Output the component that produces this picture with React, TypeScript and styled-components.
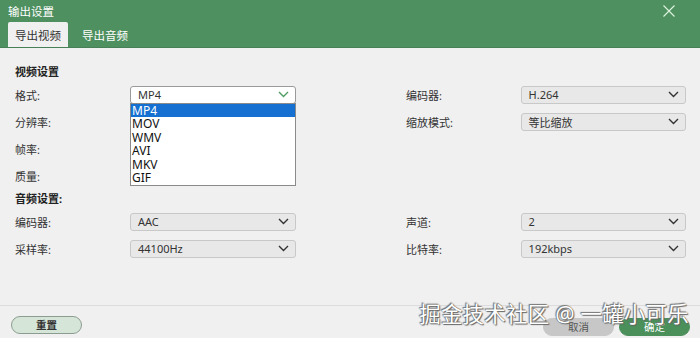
import styled, { createGlobalStyle } from "styled-components";

const GlobalStyle = createGlobalStyle`
  html, body { margin: 0; padding: 0; background: #f0f0f0; }
  body {
    font-family: "Noto Sans", "Noto Sans CJK SC", sans-serif;
    width: 700px;
    height: 338px;
    overflow: hidden;
  }
`;

const FORMATS = ["MP4", "MOV", "WMV", "AVI", "MKV", "GIF"];

const Chevron = ({ color }: { color: string }) => (
  <svg width="11" height="7" viewBox="0 0 11 7">
    <polyline
      points="1,1 5.5,5.5 10,1"
      fill="none"
      stroke={color}
      strokeWidth="1.4"
    />
  </svg>
);

interface SelectProps {
  value: string;
  open?: boolean;
}

const Select = ({ value, open }: SelectProps) => (
  <SelectWrap>
    <SelectBox $open={open}>
      <span>{value}</span>
      <Chevron color={open ? "#4f9d62" : "#333"} />
    </SelectBox>
    {open && (
      <Menu>
        {FORMATS.map((f) => (
          <MenuItem key={f} $active={f === value}>
            {f}
          </MenuItem>
        ))}
      </Menu>
    )}
  </SelectWrap>
);

const Field = ({
  label,
  children,
}: {
  label: string;
  children?: React.ReactNode;
}) => (
  <FieldRow>
    <Label>{label}</Label>
    {children}
  </FieldRow>
);

export default function App() {
  return (
    <Window>
      <GlobalStyle />
      <Header>
        <TitleBar>
          <Title>输出设置</Title>
          <CloseBtn>
            <svg width="12" height="12" viewBox="0 0 12 12">
              <path d="M0.5 0.5 L11.5 11.5 M11.5 0.5 L0.5 11.5" stroke="#dff3df" strokeWidth="1.1" />
            </svg>
          </CloseBtn>
        </TitleBar>
        <Tabs>
          <Tab $active>导出视频</Tab>
          <Tab>导出音频</Tab>
        </Tabs>
      </Header>

      <Content>
        <SectionTitle>视频设置</SectionTitle>
        <Grid>
          <Field label="格式:">
            <Select value="MP4" open />
          </Field>
          <Field label="编码器:">
            <Select value="H.264" />
          </Field>
          <Field label="分辨率:">
            <Select value="" />
          </Field>
          <Field label="缩放模式:">
            <Select value="等比缩放" />
          </Field>
          <Field label="帧率:">
            <Select value="" />
          </Field>
          <div />
          <Field label="质量:">
            <Select value="" />
          </Field>
          <div />
        </Grid>

        <SectionTitle $tight>音频设置:</SectionTitle>
        <Grid>
          <Field label="编码器:">
            <Select value="AAC" />
          </Field>
          <Field label="声道:">
            <Select value="2" />
          </Field>
          <Field label="采样率:">
            <Select value="44100Hz" />
          </Field>
          <Field label="比特率:">
            <Select value="192kbps" />
          </Field>
        </Grid>
      </Content>

      <Footer>
        <Button $kind="reset">重置</Button>
        <Actions>
          <Button $kind="cancel">取消</Button>
          <Button $kind="ok">确定</Button>
        </Actions>
      </Footer>

      <Watermark>掘金技术社区 @ 一罐小可乐</Watermark>
    </Window>
  );
}

const Window = styled.div`
  position: relative;
  width: 700px;
  height: 338px;
  display: flex;
  flex-direction: column;
  background: #f0f0f0;
  overflow: hidden;
`;

const Header = styled.header`
  height: 48px;
  background: #4e9060;
  display: flex;
  flex-direction: column;
  border-bottom: 1px solid #477f57;
  box-sizing: border-box;
`;

const TitleBar = styled.div`
  height: 22px;
  display: flex;
  align-items: center;
  justify-content: space-between;
  padding: 0 25px 0 8px;
`;

const Title = styled.span`
  color: #fff;
  font-size: 11.5px;
`;

const CloseBtn = styled.span`
  display: flex;
  margin-top: -1px;
`;

const Tabs = styled.div`
  display: flex;
  align-items: flex-end;
  padding-left: 8px;
  flex: 1;
`;

const Tab = styled.div<{ $active?: boolean }>`
  width: 60px;
  height: 25px;
  display: flex;
  align-items: center;
  justify-content: center;
  font-size: 11.5px;
  border-radius: 2px 2px 0 0;
  background: ${(p) => (p.$active ? "#f0f0f0" : "transparent")};
  color: ${(p) => (p.$active ? "#333" : "#fff")};
  margin-right: ${(p) => (p.$active ? "7px" : "0")};
`;

const Content = styled.main`
  flex: 1;
  padding: 15px 0 0 15px;
`;

const SectionTitle = styled.div<{ $tight?: boolean }>`
  height: 18px;
  line-height: 18px;
  font-size: 11px;
  font-weight: 700;
  color: #222;
  margin-top: ${(p) => (p.$tight ? "1px" : "0")};
`;

const Grid = styled.div`
  display: grid;
  grid-template-columns: 391px 280px;
`;

const FieldRow = styled.div`
  height: 27px;
  display: flex;
  align-items: center;
`;

const Label = styled.span`
  width: 115px;
  font-size: 11px;
  color: #333;
`;

const SelectWrap = styled.div`
  position: relative;
  width: 166px;
`;

const SelectBox = styled.div<{ $open?: boolean }>`
  box-sizing: border-box;
  height: 18px;
  display: flex;
  align-items: center;
  justify-content: space-between;
  padding: 0 6px 0 7px;
  font-size: 11px;
  color: #333;
  border-radius: 3px;
  border: 1px solid ${(p) => (p.$open ? "#9a9a9a" : "#c8c8c8")};
  background: ${(p) => (p.$open ? "#fff" : "#e8e8e8")};
`;

const Menu = styled.ul`
  position: absolute;
  top: 17px;
  left: 0;
  width: 166px;
  box-sizing: border-box;
  margin: 0;
  padding: 0;
  list-style: none;
  background: #fff;
  border: 1px solid #8a8a8a;
  z-index: 5;
`;

const MenuItem = styled.li<{ $active?: boolean }>`
  height: 13.6px;
  line-height: 13.6px;
  padding-left: 1px;
  font-size: 12px;
  color: ${(p) => (p.$active ? "#fff" : "#111")};
  background: ${(p) => (p.$active ? "#1570d2" : "transparent")};
`;

const Footer = styled.footer`
  height: 33px;
  box-sizing: border-box;
  border-top: 1px solid #dcdcdc;
  display: flex;
  justify-content: space-between;
  align-items: flex-start;
  padding: 10px 10px 0 11px;
`;

const Actions = styled.div`
  display: flex;
  gap: 5px;
  padding-top: 2px;
`;

const buttonColors = {
  reset: { bg: "#d5e6d9", fg: "#333", border: "#8d9c91" },
  cancel: { bg: "#c7c7c7", fg: "#555", border: "#c7c7c7" },
  ok: { bg: "#4b8f5b", fg: "#fff", border: "#4b8f5b" },
};

const Button = styled.button<{ $kind: "reset" | "cancel" | "ok" }>`
  width: 71px;
  height: 18px;
  box-sizing: border-box;
  border-radius: 9px;
  font-family: inherit;
  font-size: 10.5px;
  line-height: 1;
  padding: 0;
  font-weight: ${(p) => (p.$kind === "reset" ? 700 : 400)};
  background: ${(p) => buttonColors[p.$kind].bg};
  color: ${(p) => buttonColors[p.$kind].fg};
  border: 1px solid ${(p) => buttonColors[p.$kind].border};
`;

const Watermark = styled.div`
  position: absolute;
  right: 11px;
  bottom: 10px;
  font-size: 21.5px;
  line-height: 28px;
  color: #fff;
  letter-spacing: 0.2px;
  text-shadow: 0 0 1px #555, 1px 1px 1px #666, -1px -1px 1px #777;
  pointer-events: none;
`;
